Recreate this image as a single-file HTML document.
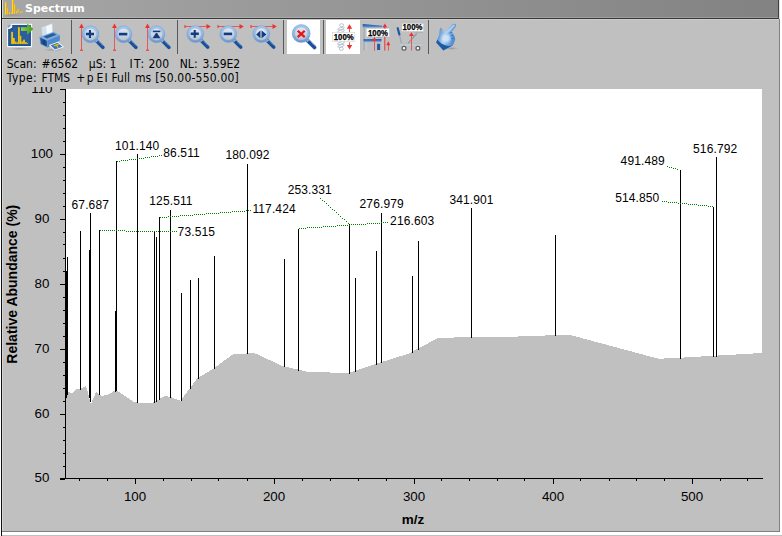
<!DOCTYPE html>
<html><head><meta charset="utf-8"><title>Spectrum</title>
<style>
html,body{margin:0;padding:0;background:#c0c0c0;overflow:hidden}
body{width:782px;height:536px;position:relative;font-family:"Liberation Sans",sans-serif}
#win{position:absolute;left:0;top:0;width:782px;height:536px;background:#c0c0c0}
#title{position:absolute;left:2px;top:0;width:776px;height:18px;background:linear-gradient(90deg,#a6a6a6,#828282)}
#title span{position:absolute;left:23px;top:2px;font:bold 11px "DejaVu Sans",sans-serif;color:#fff;letter-spacing:0px}
#tline{position:absolute;left:2px;top:18px;width:777px;height:1px;background:#383838}
#lb{position:absolute;left:1px;top:0;width:1px;height:536px;background:#101010}
#lb0{position:absolute;left:0;top:0;width:1px;height:536px;background:#fff}
#hl2{position:absolute;left:2px;top:0;width:1px;height:531px;background:#d6d6d6}
#hl17{position:absolute;left:3px;top:17px;width:775px;height:1px;background:rgba(255,255,255,0.18)}
#hl19{position:absolute;left:3px;top:19px;width:776px;height:1px;background:#cccccc}
#rb{position:absolute;left:779px;top:19px;width:1px;height:513px;background:#808080}
#rb2{position:absolute;left:780px;top:0;width:2px;height:536px;background:#fff}
#rbt{position:absolute;left:778px;top:0;width:1px;height:19px;background:#404040}
#rbt2{position:absolute;left:779px;top:0;width:1px;height:19px;background:#e0e0e0}
#info span{position:absolute;font:12px/14px "DejaVu Sans Condensed","DejaVu Sans",sans-serif;color:#000;white-space:pre}
#plot{position:absolute;left:0;top:0}
#bot1{position:absolute;left:2px;top:531px;width:778px;height:1px;background:#808080}
#bot2{position:absolute;left:2px;top:532px;width:780px;height:3px;background:#fff}
#bot3{position:absolute;left:2px;top:535px;width:780px;height:1px;background:#c0c0c0}
</style></head><body>
<div id="win">
<svg id="plot" width="782" height="536" font-family="Liberation Sans, sans-serif">
<rect x="65" y="89" width="697" height="390" fill="#fff"/>
<polygon points="65,479 65.0,400.3 67.9,391.4 71.7,393.4 75.6,389.6 80.7,388.8 85.8,386.3 87.6,391.4 90.9,404.2 96.0,392.1 101.2,396.0 107.5,394.7 116.0,390.1 134.4,402.4 152.3,402.9 165.1,396.0 170.2,397.0 180.4,400.8 197.0,378.6 213.7,368.4 232.9,354.3 254.3,353.0 283.0,366.2 309.8,372.3 349.2,372.7 383.2,361.6 408.3,353.7 438.7,337.6 503.2,337.2 536.0,335.7 570.3,335.0 658.7,358.8 680.3,357.7 762.0,353.0 762,479" fill="#c0c0c0" shape-rendering="crispEdges"/>
<g fill="#000" shape-rendering="crispEdges"><rect x="66" y="271" width="1" height="127"/><rect x="67" y="257" width="1" height="138"/><rect x="80" y="231" width="1" height="159"/><rect x="89" y="250" width="1" height="148"/><rect x="90" y="213" width="1" height="189"/><rect x="99" y="230" width="1" height="165"/><rect x="115" y="311" width="1" height="81"/><rect x="116" y="161" width="1" height="230"/><rect x="137" y="154" width="1" height="249"/><rect x="154" y="231" width="1" height="172"/><rect x="156" y="237" width="1" height="165"/><rect x="159" y="217" width="1" height="183"/><rect x="170" y="210" width="1" height="188"/><rect x="181" y="293" width="1" height="108"/><rect x="190" y="280" width="1" height="109"/><rect x="198" y="278" width="1" height="101"/><rect x="214" y="256" width="1" height="113"/><rect x="247" y="164" width="1" height="190"/><rect x="284" y="259" width="1" height="108"/><rect x="298" y="229" width="1" height="142"/><rect x="349" y="224" width="1" height="150"/><rect x="355" y="278" width="1" height="94"/><rect x="376" y="251" width="1" height="114"/><rect x="381" y="213" width="1" height="150"/><rect x="412" y="276" width="1" height="77"/><rect x="418" y="241" width="1" height="109"/><rect x="471" y="208" width="1" height="130"/><rect x="555" y="235" width="1" height="101"/><rect x="680" y="170" width="1" height="189"/><rect x="713" y="207" width="1" height="150"/><rect x="716" y="157" width="1" height="200"/></g>
<g id="axes" fill="#000" shape-rendering="crispEdges">
<rect x="65" y="89" width="1" height="390"/>
<rect x="60" y="478" width="703" height="1"/>
<rect x="60" y="479" width="5" height="1"/><rect x="63" y="466" width="2" height="1"/><rect x="63" y="453" width="2" height="1"/><rect x="63" y="440" width="2" height="1"/><rect x="63" y="427" width="2" height="1"/><rect x="60" y="414" width="5" height="1"/><rect x="63" y="401" width="2" height="1"/><rect x="63" y="388" width="2" height="1"/><rect x="63" y="375" width="2" height="1"/><rect x="63" y="362" width="2" height="1"/><rect x="60" y="349" width="5" height="1"/><rect x="63" y="336" width="2" height="1"/><rect x="63" y="323" width="2" height="1"/><rect x="63" y="310" width="2" height="1"/><rect x="63" y="297" width="2" height="1"/><rect x="60" y="284" width="5" height="1"/><rect x="63" y="271" width="2" height="1"/><rect x="63" y="258" width="2" height="1"/><rect x="63" y="244" width="2" height="1"/><rect x="63" y="232" width="2" height="1"/><rect x="60" y="219" width="5" height="1"/><rect x="63" y="206" width="2" height="1"/><rect x="63" y="193" width="2" height="1"/><rect x="63" y="180" width="2" height="1"/><rect x="63" y="167" width="2" height="1"/><rect x="60" y="154" width="5" height="1"/><rect x="63" y="141" width="2" height="1"/><rect x="63" y="128" width="2" height="1"/><rect x="63" y="115" width="2" height="1"/><rect x="63" y="102" width="2" height="1"/><rect x="60" y="89" width="5" height="1"/><rect x="79" y="479" width="1" height="2"/><rect x="107" y="479" width="1" height="2"/><rect x="135" y="479" width="1" height="5"/><rect x="163" y="479" width="1" height="2"/><rect x="191" y="479" width="1" height="2"/><rect x="218" y="479" width="1" height="2"/><rect x="247" y="479" width="1" height="2"/><rect x="274" y="479" width="1" height="5"/><rect x="302" y="479" width="1" height="2"/><rect x="330" y="479" width="1" height="2"/><rect x="358" y="479" width="1" height="2"/><rect x="386" y="479" width="1" height="2"/><rect x="414" y="479" width="1" height="5"/><rect x="441" y="479" width="1" height="2"/><rect x="469" y="479" width="1" height="2"/><rect x="497" y="479" width="1" height="2"/><rect x="524" y="479" width="1" height="2"/><rect x="553" y="479" width="1" height="5"/><rect x="580" y="479" width="1" height="2"/><rect x="609" y="479" width="1" height="2"/><rect x="636" y="479" width="1" height="2"/><rect x="664" y="479" width="1" height="2"/><rect x="692" y="479" width="1" height="5"/><rect x="720" y="479" width="1" height="2"/><rect x="747" y="479" width="1" height="2"/>
</g>
<g font-size="13.33px" fill="#000"><text x="41.9" y="482.3" text-anchor="middle">50</text><text x="41.9" y="418.3" text-anchor="middle">60</text><text x="41.9" y="353.3" text-anchor="middle">70</text><text x="41.9" y="288.3" text-anchor="middle">80</text><text x="41.9" y="223.3" text-anchor="middle">90</text><text x="41.9" y="158.3" text-anchor="middle">100</text><text x="41.9" y="93.3" text-anchor="middle">110</text><text x="135.0" y="501" text-anchor="middle">100</text><text x="274.0" y="501" text-anchor="middle">200</text><text x="414.0" y="501" text-anchor="middle">300</text><text x="553.0" y="501" text-anchor="middle">400</text><text x="692.0" y="501" text-anchor="middle">500</text></g>
<g font-size="12px" fill="#000" letter-spacing="0.12"><text x="137.2" y="150" text-anchor="middle">101.140</text><text x="163.3" y="157" text-anchor="start">86.511</text><text x="90.3" y="209" text-anchor="middle">67.687</text><text x="171" y="205" text-anchor="middle">125.511</text><text x="252.4" y="213" text-anchor="start">117.424</text><text x="177.6" y="236" text-anchor="start">73.515</text><text x="247.5" y="159" text-anchor="middle">180.092</text><text x="287.7" y="194" text-anchor="start">253.331</text><text x="381.7" y="208" text-anchor="middle">276.979</text><text x="390.1" y="225" text-anchor="start">216.603</text><text x="471.5" y="204" text-anchor="middle">341.901</text><text x="620.6" y="165" text-anchor="start">491.489</text><text x="715.2" y="153" text-anchor="middle">516.792</text><text x="615.2" y="202" text-anchor="start">514.850</text></g>
<g fill="#008000" shape-rendering="crispEdges"><rect x="117" y="161" width="1" height="1"/><rect x="119" y="161" width="1" height="1"/><rect x="121" y="160" width="1" height="1"/><rect x="123" y="160" width="1" height="1"/><rect x="125" y="160" width="1" height="1"/><rect x="127" y="160" width="1" height="1"/><rect x="129" y="159" width="1" height="1"/><rect x="131" y="159" width="1" height="1"/><rect x="133" y="159" width="1" height="1"/><rect x="135" y="159" width="1" height="1"/><rect x="137" y="158" width="1" height="1"/><rect x="139" y="158" width="1" height="1"/><rect x="141" y="158" width="1" height="1"/><rect x="143" y="158" width="1" height="1"/><rect x="145" y="157" width="1" height="1"/><rect x="147" y="157" width="1" height="1"/><rect x="149" y="157" width="1" height="1"/><rect x="151" y="156" width="1" height="1"/><rect x="153" y="156" width="1" height="1"/><rect x="155" y="156" width="1" height="1"/><rect x="157" y="156" width="1" height="1"/><rect x="159" y="155" width="1" height="1"/><rect x="161" y="155" width="1" height="1"/><rect x="100" y="230" width="1" height="1"/><rect x="102" y="230" width="1" height="1"/><rect x="104" y="230" width="1" height="1"/><rect x="106" y="230" width="1" height="1"/><rect x="108" y="230" width="1" height="1"/><rect x="110" y="230" width="1" height="1"/><rect x="112" y="230" width="1" height="1"/><rect x="114" y="230" width="1" height="1"/><rect x="116" y="230" width="1" height="1"/><rect x="118" y="230" width="1" height="1"/><rect x="120" y="230" width="1" height="1"/><rect x="122" y="230" width="1" height="1"/><rect x="124" y="230" width="1" height="1"/><rect x="126" y="231" width="1" height="1"/><rect x="128" y="231" width="1" height="1"/><rect x="130" y="231" width="1" height="1"/><rect x="132" y="231" width="1" height="1"/><rect x="134" y="231" width="1" height="1"/><rect x="136" y="231" width="1" height="1"/><rect x="138" y="231" width="1" height="1"/><rect x="140" y="231" width="1" height="1"/><rect x="142" y="231" width="1" height="1"/><rect x="144" y="231" width="1" height="1"/><rect x="146" y="231" width="1" height="1"/><rect x="148" y="231" width="1" height="1"/><rect x="150" y="231" width="1" height="1"/><rect x="152" y="231" width="1" height="1"/><rect x="154" y="231" width="1" height="1"/><rect x="156" y="231" width="1" height="1"/><rect x="158" y="231" width="1" height="1"/><rect x="160" y="231" width="1" height="1"/><rect x="162" y="231" width="1" height="1"/><rect x="164" y="231" width="1" height="1"/><rect x="166" y="231" width="1" height="1"/><rect x="168" y="231" width="1" height="1"/><rect x="170" y="231" width="1" height="1"/><rect x="172" y="231" width="1" height="1"/><rect x="174" y="231" width="1" height="1"/><rect x="176" y="231" width="1" height="1"/><rect x="160" y="217" width="1" height="1"/><rect x="162" y="217" width="1" height="1"/><rect x="164" y="217" width="1" height="1"/><rect x="166" y="217" width="1" height="1"/><rect x="168" y="216" width="1" height="1"/><rect x="170" y="216" width="1" height="1"/><rect x="172" y="216" width="1" height="1"/><rect x="174" y="216" width="1" height="1"/><rect x="176" y="216" width="1" height="1"/><rect x="178" y="216" width="1" height="1"/><rect x="180" y="215" width="1" height="1"/><rect x="182" y="215" width="1" height="1"/><rect x="184" y="215" width="1" height="1"/><rect x="186" y="215" width="1" height="1"/><rect x="188" y="215" width="1" height="1"/><rect x="190" y="215" width="1" height="1"/><rect x="192" y="215" width="1" height="1"/><rect x="194" y="214" width="1" height="1"/><rect x="196" y="214" width="1" height="1"/><rect x="198" y="214" width="1" height="1"/><rect x="200" y="214" width="1" height="1"/><rect x="202" y="214" width="1" height="1"/><rect x="204" y="214" width="1" height="1"/><rect x="206" y="213" width="1" height="1"/><rect x="208" y="213" width="1" height="1"/><rect x="210" y="213" width="1" height="1"/><rect x="212" y="213" width="1" height="1"/><rect x="214" y="213" width="1" height="1"/><rect x="216" y="213" width="1" height="1"/><rect x="218" y="213" width="1" height="1"/><rect x="220" y="212" width="1" height="1"/><rect x="222" y="212" width="1" height="1"/><rect x="224" y="212" width="1" height="1"/><rect x="226" y="212" width="1" height="1"/><rect x="228" y="212" width="1" height="1"/><rect x="230" y="212" width="1" height="1"/><rect x="232" y="211" width="1" height="1"/><rect x="234" y="211" width="1" height="1"/><rect x="236" y="211" width="1" height="1"/><rect x="238" y="211" width="1" height="1"/><rect x="240" y="211" width="1" height="1"/><rect x="242" y="211" width="1" height="1"/><rect x="244" y="211" width="1" height="1"/><rect x="246" y="210" width="1" height="1"/><rect x="248" y="210" width="1" height="1"/><rect x="250" y="210" width="1" height="1"/><rect x="299" y="228" width="1" height="1"/><rect x="301" y="228" width="1" height="1"/><rect x="303" y="228" width="1" height="1"/><rect x="305" y="228" width="1" height="1"/><rect x="307" y="227" width="1" height="1"/><rect x="309" y="227" width="1" height="1"/><rect x="311" y="227" width="1" height="1"/><rect x="313" y="227" width="1" height="1"/><rect x="315" y="227" width="1" height="1"/><rect x="317" y="227" width="1" height="1"/><rect x="319" y="227" width="1" height="1"/><rect x="321" y="227" width="1" height="1"/><rect x="323" y="226" width="1" height="1"/><rect x="325" y="226" width="1" height="1"/><rect x="327" y="226" width="1" height="1"/><rect x="329" y="226" width="1" height="1"/><rect x="331" y="226" width="1" height="1"/><rect x="333" y="226" width="1" height="1"/><rect x="335" y="226" width="1" height="1"/><rect x="337" y="225" width="1" height="1"/><rect x="339" y="225" width="1" height="1"/><rect x="341" y="225" width="1" height="1"/><rect x="343" y="225" width="1" height="1"/><rect x="345" y="225" width="1" height="1"/><rect x="347" y="225" width="1" height="1"/><rect x="349" y="225" width="1" height="1"/><rect x="351" y="224" width="1" height="1"/><rect x="353" y="224" width="1" height="1"/><rect x="355" y="224" width="1" height="1"/><rect x="357" y="224" width="1" height="1"/><rect x="359" y="224" width="1" height="1"/><rect x="361" y="224" width="1" height="1"/><rect x="363" y="224" width="1" height="1"/><rect x="365" y="224" width="1" height="1"/><rect x="367" y="223" width="1" height="1"/><rect x="369" y="223" width="1" height="1"/><rect x="371" y="223" width="1" height="1"/><rect x="373" y="223" width="1" height="1"/><rect x="375" y="223" width="1" height="1"/><rect x="377" y="223" width="1" height="1"/><rect x="379" y="223" width="1" height="1"/><rect x="381" y="222" width="1" height="1"/><rect x="383" y="222" width="1" height="1"/><rect x="385" y="222" width="1" height="1"/><rect x="387" y="222" width="1" height="1"/><rect x="348" y="223" width="1" height="1"/><rect x="346" y="221" width="1" height="1"/><rect x="344" y="219" width="1" height="1"/><rect x="342" y="218" width="1" height="1"/><rect x="340" y="216" width="1" height="1"/><rect x="338" y="214" width="1" height="1"/><rect x="336" y="212" width="1" height="1"/><rect x="334" y="210" width="1" height="1"/><rect x="332" y="209" width="1" height="1"/><rect x="330" y="207" width="1" height="1"/><rect x="328" y="205" width="1" height="1"/><rect x="326" y="203" width="1" height="1"/><rect x="324" y="201" width="1" height="1"/><rect x="322" y="200" width="1" height="1"/><rect x="320" y="198" width="1" height="1"/><rect x="667" y="166" width="1" height="1"/><rect x="669" y="167" width="1" height="1"/><rect x="671" y="167" width="1" height="1"/><rect x="673" y="168" width="1" height="1"/><rect x="675" y="168" width="1" height="1"/><rect x="677" y="169" width="1" height="1"/><rect x="662" y="201" width="1" height="1"/><rect x="664" y="201" width="1" height="1"/><rect x="666" y="201" width="1" height="1"/><rect x="668" y="202" width="1" height="1"/><rect x="670" y="202" width="1" height="1"/><rect x="672" y="202" width="1" height="1"/><rect x="674" y="202" width="1" height="1"/><rect x="676" y="202" width="1" height="1"/><rect x="678" y="203" width="1" height="1"/><rect x="680" y="203" width="1" height="1"/><rect x="682" y="203" width="1" height="1"/><rect x="684" y="203" width="1" height="1"/><rect x="686" y="203" width="1" height="1"/><rect x="688" y="204" width="1" height="1"/><rect x="690" y="204" width="1" height="1"/><rect x="692" y="204" width="1" height="1"/><rect x="694" y="204" width="1" height="1"/><rect x="696" y="204" width="1" height="1"/><rect x="698" y="205" width="1" height="1"/><rect x="700" y="205" width="1" height="1"/><rect x="702" y="205" width="1" height="1"/><rect x="704" y="205" width="1" height="1"/><rect x="706" y="205" width="1" height="1"/><rect x="708" y="206" width="1" height="1"/><rect x="710" y="206" width="1" height="1"/><rect x="712" y="206" width="1" height="1"/></g>
<text x="412.9" y="524" font-size="13.5px" font-weight="bold" text-anchor="middle">m/z</text>
<text transform="translate(17.3,284.2) rotate(-90)" font-size="14px" font-weight="bold" text-anchor="middle">Relative Abundance (%)</text>
</svg>
<div id="infobg" style="position:absolute;left:2px;top:19px;width:777px;height:68px;background:#c0c0c0"></div>
<div id="title"><span>Spectrum</span></div>
<div id="hl2"></div><div id="hl17"></div><div id="hl19"></div><div id="tline"></div><div id="lb0"></div><div id="lb"></div><div id="rb2"></div><div id="rb"></div><div id="rbt"></div><div id="rbt2"></div>
<div id="info"><span style="left:6.7px;top:56.5px">Scan:</span><span style="left:41.6px;top:56.5px">#6562</span><span style="left:88.8px;top:56.5px">µS:</span><span style="right:665.7px;top:56.5px">1</span><span style="left:129.6px;top:56.5px;letter-spacing:1.2px">IT:</span><span style="right:613.0px;top:56.5px">200</span><span style="left:179.8px;top:56.5px">NL:</span><span style="right:541.8px;top:56.5px">3.59E2</span><span style="left:6.8px;top:70.5px;letter-spacing:0.4px">Type:</span><span style="left:41.4px;top:70.5px">FTMS</span><span style="left:76.2px;top:70.5px">+</span><span style="left:86.8px;top:70.5px">p</span><span style="left:96.5px;top:70.5px;letter-spacing:1.3px">EI</span><span style="left:111.5px;top:70.5px">Full</span><span style="left:135px;top:70.5px">ms</span><span style="left:155.2px;top:70.5px;letter-spacing:0.2px">[50.00-550.00]</span></div>
<div id="toolbar"><svg id="tb" style="position:absolute;left:0;top:0" width="782" height="60" font-family="Liberation Sans, sans-serif"><defs>
<linearGradient id="lensg" x1="0" y1="0" x2="0" y2="1"><stop offset="0" stop-color="#e8edf4"/><stop offset="0.5" stop-color="#ccd4df"/><stop offset="1" stop-color="#b6c0ce"/></linearGradient>
<linearGradient id="grn" x1="0" y1="0" x2="1" y2="0"><stop offset="0" stop-color="#8fd04a"/><stop offset="1" stop-color="#3f9a1c"/></linearGradient>
<linearGradient id="blu" x1="0" y1="0" x2="0" y2="1"><stop offset="0" stop-color="#6fa3dc"/><stop offset="1" stop-color="#1f5aa6"/></linearGradient>
<linearGradient id="hand" x1="0" y1="0" x2="1" y2="0.3"><stop offset="0" stop-color="#2c6fbe"/><stop offset="0.5" stop-color="#a9cbee"/><stop offset="1" stop-color="#4a88d0"/></linearGradient>
<filter id="blur1"><feGaussianBlur stdDeviation="1.2"/></filter><linearGradient id="pfront" x1="0" y1="0" x2="1" y2="0"><stop offset="0" stop-color="#2c62a8"/><stop offset="0.6" stop-color="#163f7c"/><stop offset="1" stop-color="#2c62a8"/></linearGradient><linearGradient id="blu2" x1="0" y1="0" x2="0" y2="1"><stop offset="0" stop-color="#1a529e"/><stop offset="0.5" stop-color="#3f78c0"/><stop offset="1" stop-color="#9abce4"/></linearGradient><linearGradient id="post" x1="0" y1="0" x2="1" y2="0"><stop offset="0" stop-color="#9a9ea4"/><stop offset="1" stop-color="#d2d5d9"/></linearGradient><linearGradient id="ringg" gradientUnits="userSpaceOnUse" x1="0" y1="-8.5" x2="0" y2="8.5"><stop offset="0" stop-color="#a9caf0"/><stop offset="0.55" stop-color="#8fb6e4"/><stop offset="1" stop-color="#6a94ca"/></linearGradient><radialGradient id="shd"><stop offset="0" stop-color="#808080" stop-opacity="0.7"/><stop offset="1" stop-color="#a0a0a0" stop-opacity="0"/></radialGradient>
</defs><g fill="#f0a81c"><rect x="5" y="2.3" width="2" height="12.5"/><rect x="7" y="8.4" width="1.2" height="6.2"/><rect x="9" y="12" width="1.2" height="2.3"/><rect x="11" y="13" width="1" height="1.0"/><rect x="12" y="0" width="2" height="13.8"/><rect x="14" y="4.6" width="1.3" height="9.2"/><rect x="16" y="11" width="1.1" height="2.5"/><rect x="17.6" y="9.2" width="1.3" height="3.6"/><rect x="20.2" y="11" width="1" height="1.8"/><rect x="21.7" y="11.5" width="1.1" height="1.3"/></g><g fill="#f8dc20"><rect x="5" y="2.3" width="1.00" height="12.5"/><rect x="7" y="8.4" width="0.60" height="6.2"/><rect x="9" y="12" width="0.60" height="2.3"/><rect x="11" y="13" width="0.50" height="1.0"/><rect x="12" y="0" width="1.00" height="13.8"/><rect x="14" y="4.6" width="0.65" height="9.2"/><rect x="16" y="11" width="0.55" height="2.5"/><rect x="17.6" y="9.2" width="0.65" height="3.6"/><rect x="20.2" y="11" width="0.50" height="1.8"/><rect x="21.7" y="11.5" width="0.55" height="1.3"/></g><ellipse cx="13" cy="15.2" rx="8" ry="0.9" fill="#8c90a0" fill-opacity="0.45"/><rect x="287" y="20" width="33" height="34" fill="#fff"/><rect x="326" y="20" width="34" height="34" fill="#fff"/><rect x="71" y="20" width="1" height="34" fill="#585858" shape-rendering="crispEdges"/><rect x="177" y="20" width="1" height="34" fill="#585858" shape-rendering="crispEdges"/><rect x="283" y="20" width="1" height="34" fill="#585858" shape-rendering="crispEdges"/><rect x="323" y="20" width="1" height="34" fill="#585858" shape-rendering="crispEdges"/><rect x="428" y="20" width="1" height="34" fill="#585858" shape-rendering="crispEdges"/><ellipse cx="19.5" cy="48.8" rx="11" ry="1.5" fill="url(#shd)"/><path d="M12,24.4 H31.5 V46.6 H7.6 V28.8Z" fill="#2a5e9f" stroke="#f2f5fa" stroke-width="1.2" stroke-linejoin="round"/><rect x="9" y="26" width="21.2" height="19.2" fill="none" stroke="#1d4b88" stroke-width="0.8"/><path d="M7.2,29 L12,24.2 L12.3,27 C11.5,28.6 9.5,29.2 7.2,29Z" fill="#f4f6fa"/><path d="M8,29.6 C10,29.8 12,29 12.6,27.2 L12.6,29.8Z" fill="#173f78"/><g fill="#f2c20a"><rect x="11.2" y="31.9" width="1.8" height="12.0"/><rect x="13" y="37.9" width="1.8" height="6.0"/><rect x="14.8" y="41.6" width="1.7" height="2.3"/><rect x="16.5" y="42.4" width="1.5" height="1.5"/><rect x="18" y="27.2" width="1.8" height="16.7"/><rect x="19.8" y="35.8" width="1.5" height="8.1"/><rect x="21.3" y="41.5" width="1.8" height="2.4"/><rect x="23.1" y="39.7" width="1.8" height="4.2"/><rect x="24.9" y="42.1" width="1.8" height="1.8"/><rect x="26.7" y="43" width="1.2" height="0.9"/></g><path d="M21,27.2 H27.2 V23.2 L33.3,29 L27.2,34.7 V31 H21Z" fill="url(#grn)"/><ellipse cx="53" cy="49.8" rx="11" ry="1.6" fill="url(#shd)"/><path d="M41.7,27.8 L52.1,23.6 L52.7,32.6 L43,36.8Z" fill="#f6f9fc" stroke="#c5d3e4" stroke-width="0.5"/><path d="M41.7,27.8 L46,26.1 L47,35 L43,36.8Z" fill="#cfe0f2"/><path d="M39.6,37 L53.9,31.6 L59.9,35.2 L47.3,40.6Z" fill="#7aaade"/><path d="M43.6,36.6 L53.3,33 L56.4,34.8 L46.8,38.6Z" fill="#2a5a98"/><path d="M39.6,37 L47.3,40.6 L47.6,47.4 L40.5,43.9Z" fill="url(#pfront)" stroke="#7fb0e2" stroke-width="0.6" stroke-linejoin="round"/><path d="M47.3,40.6 L59.9,35.2 L59.9,40.6 L47.6,47.4Z" fill="#4f88cc"/><path d="M48.8,45.1 L58.1,41.8 L64.1,46.9 L54.5,50.4Z" fill="#f2f6fb"/><path d="M50.6,45.3 L57.8,42.8 L62.4,46.8 L54.8,49.5Z" fill="#3a78c0"/><path d="M53.4,45.2 L58.6,43.6 L59.4,44.6 L57.4,45.2 L58.6,47.4 L57.4,47.8 L56.2,45.6 L54.2,46.2Z" fill="#f0c000"/><g stroke="none"><rect x="81" y="27" width="1" height="23.5" fill="#e25a5a"/><path d="M81.5,23.6 L83.9,27.9 L79.1,27.9Z" fill="#ee3030"/><rect x="80" y="49.6" width="3" height="1.2" fill="#ee4040"/></g><g transform="translate(90.5,34.3) scale(1)"><line x1="5" y1="5.6" x2="12.5" y2="13.1" stroke="#5a8cc8" stroke-width="4" stroke-linecap="round" stroke-opacity="0.6"/><line x1="5" y1="5.6" x2="12.4" y2="13.0" stroke="#1c4e96" stroke-width="3.2" stroke-linecap="round"/><line x1="6.4" y1="5.2" x2="12.9" y2="11.7" stroke="#9fc3ea" stroke-width="0.8" stroke-dasharray="1,0.8"/><line x1="4.2" y1="4.6" x2="6.6" y2="7.2" stroke="#8fb3dc" stroke-width="2.6" /><circle r="7.3" fill="url(#lensg)" stroke="url(#ringg)" stroke-width="2.3"/><circle r="8.35" fill="none" stroke="#6796cf" stroke-opacity="0.8" stroke-width="0.6"/><circle r="6.1" fill="none" stroke="#7fa6d6" stroke-opacity="0.7" stroke-width="0.5"/><path d="M-4.6,-1.5h3v-2.7h2.1v2.7h3v2.4h-3v2.7h-2.1v-2.7h-3z" fill="#0f3d80"/></g><g stroke="none"><rect x="114" y="27" width="1" height="23.5" fill="#e25a5a"/><path d="M114.5,23.6 L116.9,27.9 L112.1,27.9Z" fill="#ee3030"/><rect x="113" y="49.6" width="3" height="1.2" fill="#ee4040"/></g><g transform="translate(123.5,34.3) scale(1)"><line x1="5" y1="5.6" x2="12.5" y2="13.1" stroke="#5a8cc8" stroke-width="4" stroke-linecap="round" stroke-opacity="0.6"/><line x1="5" y1="5.6" x2="12.4" y2="13.0" stroke="#1c4e96" stroke-width="3.2" stroke-linecap="round"/><line x1="6.4" y1="5.2" x2="12.9" y2="11.7" stroke="#9fc3ea" stroke-width="0.8" stroke-dasharray="1,0.8"/><line x1="4.2" y1="4.6" x2="6.6" y2="7.2" stroke="#8fb3dc" stroke-width="2.6" /><circle r="7.3" fill="url(#lensg)" stroke="url(#ringg)" stroke-width="2.3"/><circle r="8.35" fill="none" stroke="#6796cf" stroke-opacity="0.8" stroke-width="0.6"/><circle r="6.1" fill="none" stroke="#7fa6d6" stroke-opacity="0.7" stroke-width="0.5"/><rect x="-4.6" y="-1.5" width="8.4" height="2.6" fill="#0f3d80"/></g><g stroke="none"><rect x="147" y="27" width="1" height="23.5" fill="#e25a5a"/><path d="M147.5,23.6 L149.9,27.9 L145.1,27.9Z" fill="#ee3030"/><rect x="146" y="49.6" width="3" height="1.2" fill="#ee4040"/></g><g transform="translate(156.5,34.3) scale(1)"><line x1="5" y1="5.6" x2="12.5" y2="13.1" stroke="#5a8cc8" stroke-width="4" stroke-linecap="round" stroke-opacity="0.6"/><line x1="5" y1="5.6" x2="12.4" y2="13.0" stroke="#1c4e96" stroke-width="3.2" stroke-linecap="round"/><line x1="6.4" y1="5.2" x2="12.9" y2="11.7" stroke="#9fc3ea" stroke-width="0.8" stroke-dasharray="1,0.8"/><line x1="4.2" y1="4.6" x2="6.6" y2="7.2" stroke="#8fb3dc" stroke-width="2.6" /><circle r="7.3" fill="url(#lensg)" stroke="url(#ringg)" stroke-width="2.3"/><circle r="8.35" fill="none" stroke="#6796cf" stroke-opacity="0.8" stroke-width="0.6"/><circle r="6.1" fill="none" stroke="#7fa6d6" stroke-opacity="0.7" stroke-width="0.5"/><rect x="-3.7" y="-3.7" width="7.6" height="1.6" fill="#0f3d80"/><path d="M-0.6,-1.3 L0.6,-1.3 L4,3.9 L-4,3.9Z" fill="#0f3d80"/></g><g stroke="none"><rect x="185" y="26" width="22.80000000000001" height="1" fill="#e25a5a"/><path d="M210.8,26.5 L206.5,24.1 L206.5,28.9Z" fill="#ee3030"/><rect x="184.4" y="25" width="1.2" height="3" fill="#ee4040"/></g><g transform="translate(195.3,34.1) scale(1)"><line x1="5" y1="5.6" x2="12.5" y2="13.1" stroke="#5a8cc8" stroke-width="4" stroke-linecap="round" stroke-opacity="0.6"/><line x1="5" y1="5.6" x2="12.4" y2="13.0" stroke="#1c4e96" stroke-width="3.2" stroke-linecap="round"/><line x1="6.4" y1="5.2" x2="12.9" y2="11.7" stroke="#9fc3ea" stroke-width="0.8" stroke-dasharray="1,0.8"/><line x1="4.2" y1="4.6" x2="6.6" y2="7.2" stroke="#8fb3dc" stroke-width="2.6" /><circle r="7.3" fill="url(#lensg)" stroke="url(#ringg)" stroke-width="2.3"/><circle r="8.35" fill="none" stroke="#6796cf" stroke-opacity="0.8" stroke-width="0.6"/><circle r="6.1" fill="none" stroke="#7fa6d6" stroke-opacity="0.7" stroke-width="0.5"/><path d="M-4.6,-1.5h3v-2.7h2.1v2.7h3v2.4h-3v2.7h-2.1v-2.7h-3z" fill="#0f3d80"/></g><g stroke="none"><rect x="218" y="26" width="22.80000000000001" height="1" fill="#e25a5a"/><path d="M243.8,26.5 L239.5,24.1 L239.5,28.9Z" fill="#ee3030"/><rect x="217.4" y="25" width="1.2" height="3" fill="#ee4040"/></g><g transform="translate(228.3,34.1) scale(1)"><line x1="5" y1="5.6" x2="12.5" y2="13.1" stroke="#5a8cc8" stroke-width="4" stroke-linecap="round" stroke-opacity="0.6"/><line x1="5" y1="5.6" x2="12.4" y2="13.0" stroke="#1c4e96" stroke-width="3.2" stroke-linecap="round"/><line x1="6.4" y1="5.2" x2="12.9" y2="11.7" stroke="#9fc3ea" stroke-width="0.8" stroke-dasharray="1,0.8"/><line x1="4.2" y1="4.6" x2="6.6" y2="7.2" stroke="#8fb3dc" stroke-width="2.6" /><circle r="7.3" fill="url(#lensg)" stroke="url(#ringg)" stroke-width="2.3"/><circle r="8.35" fill="none" stroke="#6796cf" stroke-opacity="0.8" stroke-width="0.6"/><circle r="6.1" fill="none" stroke="#7fa6d6" stroke-opacity="0.7" stroke-width="0.5"/><rect x="-4.6" y="-1.5" width="8.4" height="2.6" fill="#0f3d80"/></g><g stroke="none"><rect x="251" y="26" width="22.80000000000001" height="1" fill="#e25a5a"/><path d="M276.8,26.5 L272.5,24.1 L272.5,28.9Z" fill="#ee3030"/><rect x="250.4" y="25" width="1.2" height="3" fill="#ee4040"/></g><g transform="translate(261.3,34.1) scale(1)"><line x1="5" y1="5.6" x2="12.5" y2="13.1" stroke="#5a8cc8" stroke-width="4" stroke-linecap="round" stroke-opacity="0.6"/><line x1="5" y1="5.6" x2="12.4" y2="13.0" stroke="#1c4e96" stroke-width="3.2" stroke-linecap="round"/><line x1="6.4" y1="5.2" x2="12.9" y2="11.7" stroke="#9fc3ea" stroke-width="0.8" stroke-dasharray="1,0.8"/><line x1="4.2" y1="4.6" x2="6.6" y2="7.2" stroke="#8fb3dc" stroke-width="2.6" /><circle r="7.3" fill="url(#lensg)" stroke="url(#ringg)" stroke-width="2.3"/><circle r="8.35" fill="none" stroke="#6796cf" stroke-opacity="0.8" stroke-width="0.6"/><circle r="6.1" fill="none" stroke="#7fa6d6" stroke-opacity="0.7" stroke-width="0.5"/><path d="M-0.9,-3.7 L-0.9,4.2 L-5.1,0.3Z M0.3,-3.7 L0.3,4.2 L5.1,0.3Z" fill="#0f3d80"/></g><g transform="translate(301.2,33.5) scale(1.07)"><line x1="5" y1="5.6" x2="12.5" y2="13.1" stroke="#5a8cc8" stroke-width="4" stroke-linecap="round" stroke-opacity="0.6"/><line x1="5" y1="5.6" x2="12.4" y2="13.0" stroke="#1c4e96" stroke-width="3.2" stroke-linecap="round"/><line x1="6.4" y1="5.2" x2="12.9" y2="11.7" stroke="#9fc3ea" stroke-width="0.8" stroke-dasharray="1,0.8"/><line x1="4.2" y1="4.6" x2="6.6" y2="7.2" stroke="#8fb3dc" stroke-width="2.6" /><circle r="7.3" fill="url(#lensg)" stroke="url(#ringg)" stroke-width="2.3"/><circle r="8.35" fill="none" stroke="#6796cf" stroke-opacity="0.8" stroke-width="0.6"/><circle r="6.1" fill="none" stroke="#7fa6d6" stroke-opacity="0.7" stroke-width="0.5"/><path d="M-3.3,-2.6 L3.3,3.4 M3.3,-2.6 L-3.3,3.4" stroke="#e8141c" stroke-width="2.1" stroke-linecap="butt"/></g><g stroke="#b2bfcd" stroke-width="0.9" fill="none"><ellipse cx="341.6" cy="25.2" rx="2" ry="1.5"/><ellipse cx="341" cy="28.6" rx="3.4" ry="1.1" transform="rotate(-18 341 28.6)"/><ellipse cx="341" cy="31.2" rx="3.6" ry="1.1" transform="rotate(-18 341 31.2)"/><ellipse cx="341" cy="43" rx="3.6" ry="1.1" transform="rotate(-18 341 43)"/><ellipse cx="341" cy="45.8" rx="3.4" ry="1.1" transform="rotate(-18 341 45.8)"/><ellipse cx="341.4" cy="48.8" rx="2" ry="1.6"/></g><g><rect x="349" y="28" width="1" height="4.2" fill="#e25a5a"/><path d="M349.5,24.2 L352.2,28.7 L346.8,28.7Z" fill="#ee3030"/><rect x="349" y="42.3" width="1" height="4" fill="#e25a5a"/><path d="M349.5,49.6 L352.2,45.1 L346.8,45.1Z" fill="#ee3030"/></g><rect x="332.4" y="32.5" width="22.4" height="9" fill="#fff" stroke="#c4c8cc" stroke-width="0.5"/><text x="343.7" y="40.1" font-size="8.4px" font-weight="bold" text-anchor="middle" fill="#000" stroke="#000" stroke-width="0.25" textLength="19.9" lengthAdjust="spacingAndGlyphs">100%</text><rect x="363.7" y="28" width="2.7" height="22.3" fill="url(#post)"/><path d="M362.7,24 L382.2,25.7 L382.2,27.4 L362.7,28.1Z" fill="url(#blu2)"/><path d="M363.4,39.3 L381.5,39 L381.5,41.9 L363.4,42.2Z" fill="url(#blu2)"/><rect x="376.5" y="37.2" width="5" height="0.9" fill="#9aa0a8"/><rect x="377.1" y="43.8" width="3" height="6.2" fill="#1f5aa6"/><rect x="382" y="27.4" width="1.2" height="23" fill="#c8ccd2" fill-opacity="0.7"/><g><rect x="374" y="40" width="1" height="10.6" fill="#e25a5a"/><path d="M374.5,37 L376.8,41 L372.2,41Z" fill="#ee3030"/><rect x="384" y="27" width="1.4" height="23.6" fill="#e25a5a"/><path d="M384.8,23.6 L387.3,27.6 L382.5,27.6Z" fill="#ee3030"/><rect x="388" y="44.5" width="1" height="6.1" fill="#e25a5a"/><path d="M388.3,41.2 L390.3,45.3 L386.2,45.3Z" fill="#ee3030"/></g><rect x="366.7" y="28.7" width="22.5" height="7.8" fill="#fff"/><text x="378" y="35.8" font-size="8.4px" font-weight="bold" text-anchor="middle" fill="#000" stroke="#000" stroke-width="0.25" textLength="19.9" lengthAdjust="spacingAndGlyphs">100%</text><line x1="399.4" y1="34" x2="401.8" y2="45" stroke="#a4acb6" stroke-width="1.6"/><line x1="397.7" y1="28.2" x2="399.4" y2="34.4" stroke="#1f5aa6" stroke-width="2.2" stroke-linecap="round"/><rect x="398" y="43.4" width="25.2" height="3.4" fill="#b4bcc4"/><rect x="399" y="44.6" width="24" height="0.8" fill="#d4dae0"/><line x1="408.1" y1="43.4" x2="416.8" y2="33.4" stroke="#8e959d" stroke-width="1.2"/><line x1="414" y1="32.5" x2="423" y2="32.5" stroke="#a4acb6" stroke-width="0.8"/><circle cx="404" cy="48.2" r="1.9" fill="#fff" stroke="#5a5a5a" stroke-width="1.2"/><circle cx="417.9" cy="48.2" r="1.9" fill="#fff" stroke="#5a5a5a" stroke-width="1.2"/><g><rect x="411" y="35" width="1" height="15.6" fill="#e25a5a"/><path d="M411.4,32.2 L413.9,36 L408.9,36Z" fill="#ee3030"/></g><rect x="402.1" y="23.7" width="21.2" height="7.5" fill="#fff"/><text x="412.5" y="30.4" font-size="8.4px" font-weight="bold" text-anchor="middle" fill="#000" stroke="#000" stroke-width="0.25" textLength="19.9" lengthAdjust="spacingAndGlyphs">100%</text><ellipse cx="451.5" cy="48.4" rx="7.5" ry="1.7" fill="url(#shd)"/><path d="M440.3,28.1 C439.6,30 439.4,32 439.2,34.4 L436.2,42.6 L443.3,50.5 L453,45.2 L455.2,39.6 C455,37.5 454.6,36.4 454.1,35.2 L451.9,31.8 L456,26.2 C456.6,24.6 455.4,23.6 454.2,23.8 C453.4,23.8 453,24 452.6,24.2 L444,32.6 L442.6,29.2 C442,27.6 441,27.2 440.3,28.1Z" fill="url(#hand)"/><path d="M436.2,42.6 L437.4,39.6 C439,42.4 442.5,44.6 446,45.6 C448.5,46.2 451,46 453,45.2 L443.3,50.5Z" fill="#1c5aa2"/><ellipse cx="446" cy="38.4" rx="4.6" ry="4.2" fill="#dcebf8" fill-opacity="0.8" filter="url(#blur1)"/><path d="M453.6,24.6 L455.4,25.6 L446.5,34 L445,33Z" fill="#b9d6f2" fill-opacity="0.8"/><g stroke="#2f6fba" stroke-width="0.9" fill="none"><path d="M449.6,33.2 L452,32.2"/><path d="M450.6,36 L453.2,35"/><path d="M451.2,38.8 L454,37.8"/></g></svg></div>
<div id="bot1"></div><div id="bot2"></div><div id="bot3"></div>
</div>
</body></html>
